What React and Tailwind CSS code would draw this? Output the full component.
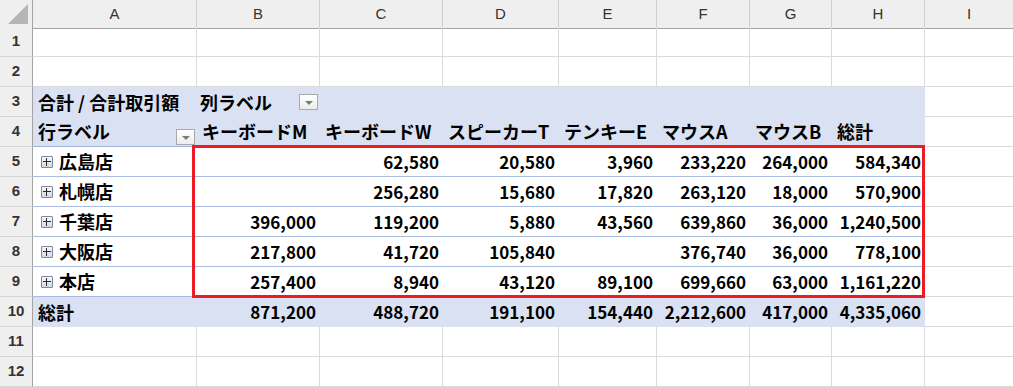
import React from 'react';

const GRID = 'grid grid-cols-[33px_164px_123px_123px_116px_98px_93px_82px_93px_1fr]';
const FONT = "font-['Noto_Sans_CJK_JP',sans-serif]";

const stores = [
  ['広島店', ['', '62,580', '20,580', '3,960', '233,220', '264,000', '584,340']],
  ['札幌店', ['', '256,280', '15,680', '17,820', '263,120', '18,000', '570,900']],
  ['千葉店', ['396,000', '119,200', '5,880', '43,560', '639,860', '36,000', '1,240,500']],
  ['大阪店', ['217,800', '41,720', '105,840', '', '376,740', '36,000', '778,100']],
  ['本店', ['257,400', '8,940', '43,120', '89,100', '699,660', '63,000', '1,161,220']],
];

const totals = ['871,200', '488,720', '191,100', '154,440', '2,212,600', '417,000', '4,335,060'];
const products = ['キーボードM', 'キーボードW', 'スピーカーT', 'テンキーE', 'マウスA', 'マウスB', '総計'];

const RowHead = ({ n }) => (
  <div className="bg-[#efefef] border-r border-r-[#a3a3a3] border-b border-b-[#d6d6d6] flex items-center justify-center text-[15px] text-[#333] font-['Liberation_Sans',sans-serif]">
    {n}
  </div>
);

const Blank = ({ last }) => (
  <div className={last ? 'border-b border-[#dadada]' : 'border-r border-b border-[#dadada]'} />
);

const Dropdown = () => (
  <div className="w-[19px] h-[16px] border border-[#a9a9a9] bg-gradient-to-b from-white to-[#ececec] flex items-center justify-center">
    <div className="w-0 h-0 border-l-[4px] border-r-[4px] border-t-[4px] border-l-transparent border-r-transparent border-t-[#7a7a7a] mt-[1px]" />
  </div>
);

const Expand = () => (
  <div className="relative w-[12px] h-[12px] min-w-[12px] border border-[#7d889c] rounded-[1px] bg-gradient-to-b from-[#f7f8fb] to-[#d3d9e4] mr-[6px]">
    <div className="absolute left-[1px] right-[1px] top-[4px] h-px bg-[#2b2b2b]" />
    <div className="absolute top-[1px] bottom-[1px] left-[4px] w-px bg-[#2b2b2b]" />
  </div>
);

const Num = ({ v }) => (
  <div className="border-b border-[#a9bce2] flex items-center justify-end pr-[4px] text-[17px]">{v}</div>
);

export default function App() {
  return (
    <div className={`relative w-[1013px] h-[387px] bg-white overflow-hidden ${FONT} font-bold text-[18px] text-black`}>
      {/* column headers */}
      <div className={`${GRID} h-[27px]`}>
        <div className="bg-[#efefef] border-r border-r-[#a3a3a3] border-b border-b-[#a3a3a3] flex items-end justify-end p-[4px]">
          <div className="w-0 h-0 border-l-[20px] border-b-[20px] border-l-transparent border-b-[#b5b5b5]" />
        </div>
        {['A', 'B', 'C', 'D', 'E', 'F', 'G', 'H', 'I'].map((c, i) => (
          <div
            key={c}
            className={`bg-[#efefef] border-b border-b-[#a3a3a3] ${i < 8 ? 'border-r border-r-[#cfcfcf]' : ''} flex items-center justify-center text-[15px] font-normal text-[#333] font-['Liberation_Sans',sans-serif]`}
          >
            {c}
          </div>
        ))}
      </div>

      {/* rows 1-2 */}
      {[1, 2].map((n) => (
        <div key={n} className={`${GRID} h-[30px]`}>
          <RowHead n={n} />
          {Array.from({ length: 9 }).map((_, i) => (
            <Blank key={i} last={i === 8} />
          ))}
        </div>
      ))}

      {/* row 3 */}
      <div className={`${GRID} h-[30px]`}>
        <RowHead n={3} />
        <div className="bg-[#d9e1f2] flex items-center pl-[5px] whitespace-nowrap">合計 / 合計取引額</div>
        <div className="bg-[#d9e1f2] flex items-center justify-between pl-[3px] pr-[2px] whitespace-nowrap">
          <span>列ラベル</span>
          <Dropdown />
        </div>
        {Array.from({ length: 6 }).map((_, i) => (
          <div key={i} className="bg-[#d9e1f2]" />
        ))}
        <Blank last />
      </div>

      {/* row 4 */}
      <div className={`${GRID} h-[30px]`}>
        <RowHead n={4} />
        <div className="bg-[#d9e1f2] border-b border-[#9fb4df] flex items-center justify-between pl-[5px] pr-[2px]">
          <span>行ラベル</span>
          <div className="self-end mb-[1px]">
            <Dropdown />
          </div>
        </div>
        {products.map((p) => (
          <div key={p} className="bg-[#d9e1f2] border-b border-[#9fb4df] flex items-center pl-[5px] whitespace-nowrap">
            {p}
          </div>
        ))}
        <Blank last />
      </div>

      {/* store rows */}
      {stores.map(([name, vals], r) => (
        <div key={name} className={`${GRID} h-[30px]`}>
          <RowHead n={5 + r} />
          <div className="border-b border-[#a9bce2] flex items-center pl-[8px]">
            <Expand />
            <span>{name}</span>
          </div>
          {vals.map((v, i) => (
            <Num key={i} v={v} />
          ))}
          <Blank last />
        </div>
      ))}

      {/* totals row */}
      <div className={`${GRID} h-[30px]`}>
        <RowHead n={10} />
        <div className="bg-[#d9e1f2] flex items-center pl-[5px]">総計</div>
        {totals.map((v, i) => (
          <div key={i} className="bg-[#d9e1f2] flex items-center justify-end pr-[4px] text-[17px]">
            {v}
          </div>
        ))}
        <Blank last />
      </div>

      {/* rows 11-12 */}
      {[11, 12].map((n) => (
        <div key={n} className={`${GRID} h-[30px]`}>
          <RowHead n={n} />
          {Array.from({ length: 9 }).map((_, i) => (
            <Blank key={i} last={i === 8} />
          ))}
        </div>
      ))}

      {/* highlight box */}
      <div className="absolute left-[192px] top-[145px] w-[733px] h-[153px] border-[3px] border-[#ec1c24] pointer-events-none" />
    </div>
  );
}
